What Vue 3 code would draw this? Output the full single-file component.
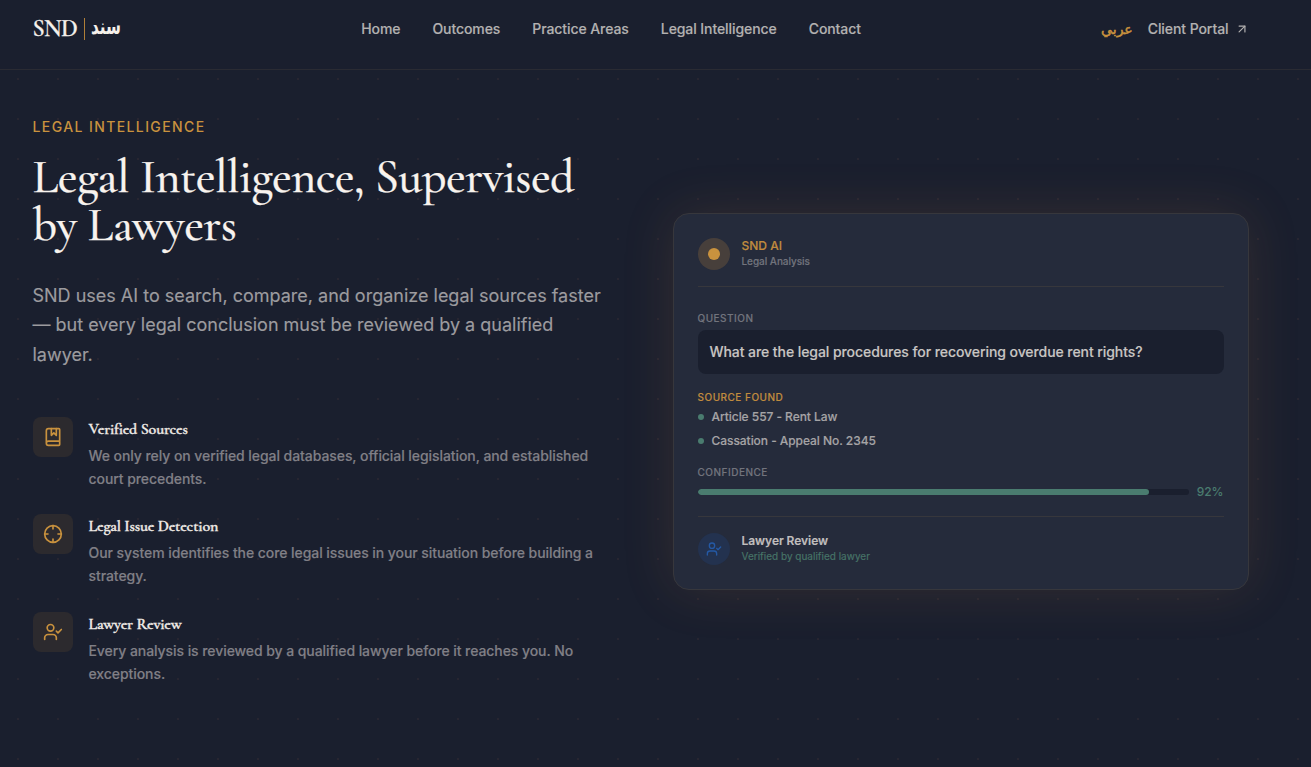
<script setup>
const links = ['Home', 'Outcomes', 'Practice Areas', 'Legal Intelligence', 'Contact']
const features = [
  { icon: 'book', title: 'Verified Sources', text: 'We only rely on verified legal databases, official legislation, and established court precedents.' },
  { icon: 'target', title: 'Legal Issue Detection', text: 'Our system identifies the core legal issues in your situation before building a strategy.' },
  { icon: 'user', title: 'Lawyer Review', text: 'Every analysis is reviewed by a qualified lawyer before it reaches you. No exceptions.' },
]
const sources = ['Article 557 - Rent Law', 'Cassation - Appeal No. 2345']
const confidence = 92
</script>

<template>
  <div class="page">
    <header class="header">
      <div class="inner">
        <a class="logo"><span class="snd">SND</span><i class="bar"></i><span class="logo-ar" lang="ar" dir="rtl">سند</span></a>
        <nav class="nav"><a v-for="l in links" :key="l">{{ l }}</a></nav>
        <div class="actions">
          <a class="lang" lang="ar" dir="rtl">عربي</a>
          <a class="portal">Client Portal
            <svg width="14" height="14" viewBox="0 0 24 24"><path d="M7 7h10v10" /><path d="M7 17 17 7" /></svg>
          </a>
        </div>
      </div>
    </header>

    <main class="hero">
      <section class="copy">
        <p class="eyebrow">LEGAL INTELLIGENCE</p>
        <h1>Legal Intelligence, Supervised by Lawyers</h1>
        <p class="lead">SND uses AI to search, compare, and organize legal sources faster — but every legal conclusion must be reviewed by a qualified lawyer.</p>
        <ul class="features">
          <li v-for="f in features" :key="f.title">
            <div class="tile">
              <svg width="20" height="20" viewBox="0 0 24 24">
                <template v-if="f.icon === 'book'">
                  <path d="M10 2v8l3-3 3 3V2" />
                  <path d="M4 19.5v-15A2.5 2.5 0 0 1 6.5 2H19a1 1 0 0 1 1 1v18a1 1 0 0 1-1 1H6.5a1 1 0 0 1 0-5H20" />
                </template>
                <template v-else-if="f.icon === 'target'">
                  <circle cx="12" cy="12" r="10" />
                  <path d="M22 12h-4M6 12H2M12 6V2M12 22v-4" />
                </template>
                <template v-else>
                  <path d="M16 21v-2a4 4 0 0 0-4-4H6a4 4 0 0 0-4 4v2" />
                  <circle cx="9" cy="7" r="4" />
                  <path d="m16 11 2 2 4-4" />
                </template>
              </svg>
            </div>
            <div>
              <h3>{{ f.title }}</h3>
              <p>{{ f.text }}</p>
            </div>
          </li>
        </ul>
      </section>

      <section class="card">
        <div class="who top">
          <div class="avatar gold"><i></i></div>
          <div><p class="name gold-t">SND AI</p><p class="sub">Legal Analysis</p></div>
        </div>
        <div class="block">
          <p class="label">QUESTION</p>
          <p class="question">What are the legal procedures for recovering overdue rent rights?</p>
        </div>
        <div class="block">
          <p class="label found">SOURCE FOUND</p>
          <ul class="sources"><li v-for="s in sources" :key="s"><i></i>{{ s }}</li></ul>
        </div>
        <div class="block">
          <p class="label">CONFIDENCE</p>
          <div class="meter">
            <div class="track"><div class="fill" :style="{ width: confidence + '%' }"></div></div>
            <span>{{ confidence }}%</span>
          </div>
        </div>
        <div class="who bottom">
          <div class="avatar blue">
            <svg width="16" height="16" viewBox="0 0 24 24">
              <path d="M16 21v-2a4 4 0 0 0-4-4H6a4 4 0 0 0-4 4v2" />
              <circle cx="9" cy="7" r="4" />
              <path d="m16 11 2 2 4-4" />
            </svg>
          </div>
          <div><p class="name">Lawyer Review</p><p class="sub green">Verified by qualified lawyer</p></div>
        </div>
      </section>
    </main>
  </div>
</template>

<style>
body { background: #1a1f2e; overflow: hidden; }
</style>

<style scoped>
* { box-sizing: border-box; margin: 0; padding: 0; }
.page {
  height: 767px; overflow: hidden; color: #f5f0eb;
  font-family: Inter, "Liberation Sans", sans-serif;
  background: radial-gradient(circle at 18px 39px, rgba(201, 110, 90, .08) 1px, transparent 1px) 0 0 / 40px 40px #1a1f2e;
}
svg { fill: none; stroke: currentColor; stroke-width: 2; stroke-linecap: round; stroke-linejoin: round; display: block; }
ul { list-style: none; }
.header { height: 70px; background: #1a1f2e; border-bottom: 1px solid #2a2b33; }
.inner { width: 1217px; height: 58px; margin-left: 32.5px; display: flex; justify-content: space-between; align-items: center; }
.logo { display: flex; align-items: center; height: 22px; width: 88.5px; }
.snd { font: 600 24px/22px "Cormorant Garamond", "Liberation Serif", serif; letter-spacing: -.6px; -webkit-text-stroke: .3px #f5f0eb; }
.bar { flex: none; width: 1.5px; height: 22px; background: #b07f38; margin: 0 5.5px 0 6.5px; }
.logo-ar { font: 700 20px/22px "DejaVu Sans", sans-serif; transform: translateY(-3px) scale(.76, 1.1); transform-origin: 0 50%; }
.nav { display: flex; gap: 32px; font-size: 14px; line-height: 20px; font-weight: 500; color: #b3b1b1; letter-spacing: -.08px; }
.actions { display: flex; justify-content: flex-end; align-items: center; gap: 15px; font-size: 14px; font-weight: 500; line-height: 20px; color: #b3b1b1; letter-spacing: -.08px; }
.lang { font-family: "DejaVu Sans", sans-serif; color: #c9923e; letter-spacing: 0; -webkit-text-stroke: .5px #c9923e; }
.portal { display: flex; align-items: center; gap: 7px; }
.nav, .portal, .features p, .question, .name, .sub, .label, .sources li { -webkit-text-stroke: .15px currentColor; }
.hero { width: 1216px; margin: 47px 0 0 32.5px; display: grid; grid-template-columns: 576px 576px; gap: 64px; align-items: center; }
.eyebrow { font-size: 14px; line-height: 20px; font-weight: 500; letter-spacing: 1.4px; color: #c9923e; }
h1 { margin-top: 16px; font: 500 48px/48px "Cormorant Garamond", "Liberation Serif", serif; letter-spacing: -.48px; color: #f8f3ee; -webkit-text-stroke: .25px currentColor; }
.lead { margin-top: 32px; font-size: 18px; line-height: 29.25px; color: #9c9b9f; -webkit-text-stroke: .15px currentColor; }
.features { margin-top: 48px; display: flex; flex-direction: column; gap: 24px; }
.features li { display: flex; gap: 16px; }
.tile { flex: none; width: 40px; height: 40px; border-radius: 8px; background: #2c2a2e; color: #c9923e; display: grid; place-items: center; }
h3 { font: 600 16px/24px "Cormorant Garamond", "Liberation Serif", serif; letter-spacing: -.19px; color: #f0ebe6; margin-bottom: 4px; -webkit-text-stroke: .35px currentColor; }
.features p { font-size: 14px; line-height: 22.75px; color: #807f86; font-weight: 500; letter-spacing: -.07px; }
.card { background: #252b3b; border: 1px solid #37373c; border-radius: 16px; padding: 24px; box-shadow: 0 0 52px rgba(201, 130, 70, .15); }
.who { display: flex; align-items: center; gap: 12px; height: 49px; }
.top { border-bottom: 1px solid #37373c; padding-bottom: 16px; margin-bottom: 24px; }
.bottom { border-top: 1px solid #37373c; padding-top: 16px; }
.avatar { width: 32px; height: 32px; border-radius: 50%; display: grid; place-items: center; }
.gold { background: #473f3b; }
.gold i { width: 12px; height: 12px; border-radius: 50%; background: #c9923e; }
.blue { background: #23324f; color: #2459a5; }
.name { font-size: 12px; line-height: 16px; font-weight: 600; letter-spacing: -.05px; color: #c0bebe; }
.name.gold-t { color: #c08b3e; font-weight: 500; letter-spacing: 0; }
.sub { font-size: 10px; line-height: 15px; color: #72747d; font-weight: 500; letter-spacing: -.04px; }
.sub.green { color: #477568; font-weight: 400; letter-spacing: 0; }
.block { margin-bottom: 16px; }
.label { font-size: 10px; line-height: 15px; font-weight: 500; letter-spacing: .5px; color: #72747d; margin-bottom: 4px; }
.found { color: #c08b3e; }
.question { background: #1a1f2e; border-radius: 8px; padding: 12px; font-size: 14px; line-height: 20px; font-weight: 500; letter-spacing: -.07px; color: #c8c5c3; }
.sources { display: flex; flex-direction: column; gap: 8px; }
.sources li { display: flex; align-items: center; gap: 8px; font-size: 12px; line-height: 16px; font-weight: 500; letter-spacing: -.05px; color: #a5a4a6; }
.sources i { width: 6px; height: 6px; border-radius: 50%; background: #4a7c6f; }
.meter { display: flex; align-items: center; gap: 8px; font-size: 12px; line-height: 16px; font-weight: 500; color: #4a7c6f; }
.track { flex: 1; height: 6px; border-radius: 3px; background: #1a1f2e; overflow: hidden; }
.fill { height: 100%; border-radius: 3px; background: #4a7c6f; }
</style>
